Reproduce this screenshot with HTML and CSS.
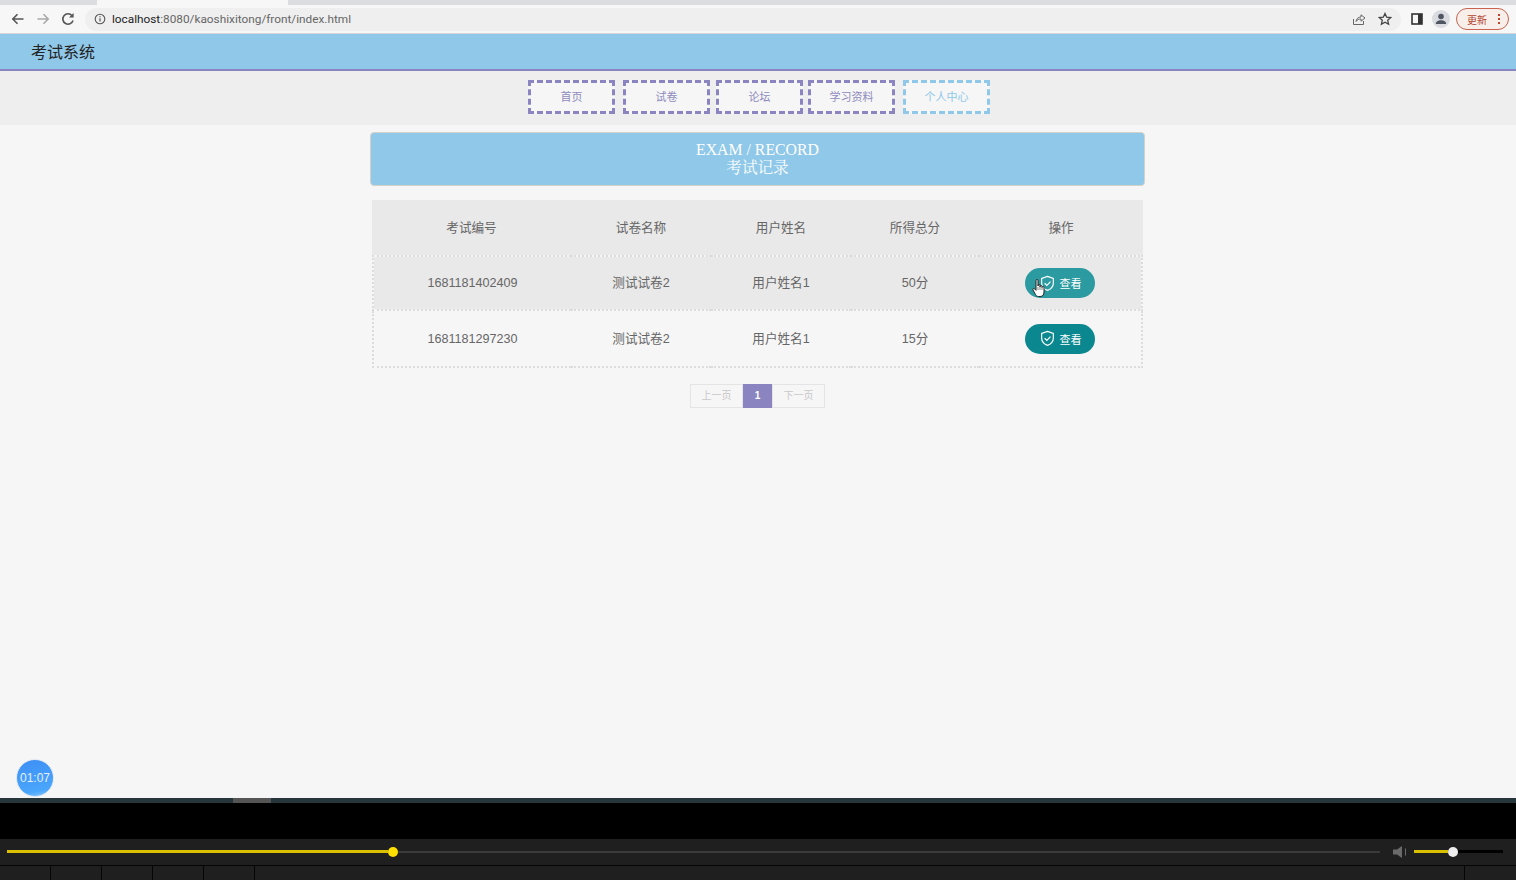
FILE: index.html
```html
<!DOCTYPE html>
<html lang="zh-CN">
<head>
    <meta charset="UTF-8">
    <meta name="viewport" content="width=device-width, initial-scale=1.0">
    <title>考试记录</title>
    <link rel="stylesheet" href="styles.css">
</head>
<body>
    <!-- browser chrome -->
    <div class="tab-strip"><div class="tab-active"></div></div>
    <div class="toolbar">
        <svg class="tool-icon" viewBox="0 0 16 16"><path d="M13.5 8H3M7.5 3.2 2.8 8l4.7 4.8" fill="none" stroke="#555" stroke-width="1.6"/></svg>
        <svg class="tool-icon" viewBox="0 0 16 16"><path d="M2.5 8H13M8.5 3.2 13.2 8l-4.7 4.8" fill="none" stroke="#aaa" stroke-width="1.6"/></svg>
        <svg class="tool-icon" viewBox="0 0 16 16"><path d="M13 9.5A5.2 5.2 0 1 1 12 4.6" fill="none" stroke="#555" stroke-width="1.6"/><path d="M13.6 2v4.6H9z" fill="#555"/></svg>
        <div class="url-bar">
            <svg class="info-icon" viewBox="0 0 12 12"><circle cx="6" cy="6" r="4.8" fill="none" stroke="#555" stroke-width="1.1"/><path d="M6 5.2v3.4M6 3.2v1.1" stroke="#555" stroke-width="1.2"/></svg>
            <span class="url-text"><span class="url-host">localhost</span>:8080/kaoshixitong/front/index.html</span>
            <svg class="url-icon" viewBox="0 0 14 14"><path d="M1.5 7v5.5h10V9" fill="none" stroke="#666" stroke-width="1"/><path d="M4 9.5c.4-3 2.500-4.500 5-4.500V2.800L13 6 9 9.200V7c-2 0-3.700.700-5 2.500z" fill="none" stroke="#666" stroke-width="1"/></svg>
            <svg class="url-icon star" viewBox="0 0 14 14"><path d="M7 1.500 8.700 5.200l4 .4-3 2.700.9 4L7 10.200l-3.600 2.100.9-4-3-2.700 4-.4z" fill="none" stroke="#444" stroke-width="1.300"/></svg>
        </div>
        <svg class="panel-icon" viewBox="0 0 12 12"><rect x="1" y="1" width="10" height="10" fill="none" stroke="#333" stroke-width="1.600"/><rect x="7" y="1" width="4" height="10" fill="#333"/></svg>
        <div class="avatar">
            <svg viewBox="0 0 18 18"><circle cx="9" cy="6.500" r="2.800" fill="#4f5560"/><path d="M3.800 14c0-2.600 2.400-3.800 5.200-3.800s5.200 1.200 5.200 3.800z" fill="#4f5560"/></svg>
        </div>
        <div class="update-btn"><span>更新</span><span class="update-dots"></span></div>
    </div>

    <!-- page -->
    <header class="site-header">考试系统</header>
    <nav class="site-nav">
        <a class="nav-item">首页</a>
        <a class="nav-item">试卷</a>
        <a class="nav-item">论坛</a>
        <a class="nav-item">学习资料</a>
        <a class="nav-item nav-active">个人中心</a>
    </nav>

    <main class="content">
        <div class="title-box">
            <div class="title-en">EXAM / RECORD</div>
            <div class="title-cn">考试记录</div>
        </div>

        <table class="record-table">
            <colgroup>
                <col class="col-id"><col class="col-paper"><col class="col-user"><col class="col-score"><col class="col-action">
            </colgroup>
            <thead>
                <tr><th>考试编号</th><th>试卷名称</th><th>用户姓名</th><th>所得总分</th><th>操作</th></tr>
            </thead>
            <tbody>
                <tr class="row-hover">
                    <td>1681181402409</td><td class="cell-cjk">测试试卷2</td><td class="cell-cjk">用户姓名1</td><td class="cell-cjk">50分</td>
                    <td>
                        <a class="view-btn btn-faded">
                            <svg class="shield" viewBox="0 0 16 16"><path d="M8 1.300 13.500 3.200v4.300c0 3.300-2.300 5.700-5.500 7-3.200-1.300-5.500-3.700-5.500-7V3.200z" fill="none" stroke="#fff" stroke-width="1.100"/><path d="M5.300 7.800 7.400 9.900l3.400-3.600" fill="none" stroke="#fff" stroke-width="1.100"/></svg>
                            查看
                        </a>
                    </td>
                </tr>
                <tr>
                    <td>1681181297230</td><td class="cell-cjk">测试试卷2</td><td class="cell-cjk">用户姓名1</td><td class="cell-cjk">15分</td>
                    <td>
                        <a class="view-btn">
                            <svg class="shield" viewBox="0 0 16 16"><path d="M8 1.300 13.500 3.200v4.300c0 3.300-2.300 5.700-5.500 7-3.200-1.300-5.500-3.700-5.500-7V3.200z" fill="none" stroke="#fff" stroke-width="1.100"/><path d="M5.300 7.800 7.400 9.900l3.400-3.600" fill="none" stroke="#fff" stroke-width="1.100"/></svg>
                            查看
                        </a>
                    </td>
                </tr>
            </tbody>
        </table>

        <div class="pager">
            <a class="page-btn page-side">上一页</a>
            <a class="page-btn page-current">1</a>
            <a class="page-btn page-side">下一页</a>
        </div>

        <!-- recording timer and mouse pointer lie over the page -->
        <div class="timer">01:07</div>
        <svg class="cursor" viewBox="0 0 16 20"><path d="M5 10V2.500a1 1 0 0 1 2 0V8 7.500a1 1 0 0 1 2 0V9 8.500a1 1 0 0 1 2 0V9.500a1 1 0 0 1 2 0V14c0 3-1.500 4.500-4 4.500H7.500c-1.500 0-2.300-.7-3-2L2 12c-.6-1 .6-2 1.500-1.200L5 12.300z" fill="#fff" stroke="#222" stroke-width="1"/><path d="M7 9v3M9 9v3M11 9.500V12" stroke="#555" stroke-width=".7"/></svg>
    </main>

    <!-- video player -->
    <div class="player-edge"><div class="player-thumb"></div></div>
    <div class="player-gap"></div>
    <div class="player-controls">
        <div class="seek">
            <div class="seek-done"></div>
            <div class="seek-knob"></div>
            <div class="seek-rest"></div>
        </div>
        <svg class="volume-icon" viewBox="0 0 16 14"><path d="M1 4.500h4L10 1v12L5 9.500H1z" fill="#6a6a6a"/><path d="M13.500 3.500v7" stroke="#6a6a6a" stroke-width="1"/></svg>
        <div class="volume">
            <div class="volume-done"></div>
            <div class="volume-knob"></div>
            <div class="volume-rest"></div>
        </div>
    </div>
    <div class="player-cells">
        <div class="cell"></div><div class="cell"></div><div class="cell"></div><div class="cell"></div><div class="cell"></div>
        <div class="cell cell-wide"></div>
        <div class="cell-end"></div>
    </div>
</body>
</html>
```

FILE: styles.css
```css
* {
    box-sizing: border-box;
}
body {
    margin: 0;
    height: 880px;
    overflow: hidden;
    display: flex;
    flex-direction: column;
    font-family: "Liberation Sans", "Noto Sans CJK SC", sans-serif;
    background-color: #f6f6f6;
    color: #666;
}

/* browser chrome */
.tab-strip {
    height: 5px;
    background-color: #dcdde0;
    padding-left: 97px;
}
.tab-active {
    width: 191px;
    height: 5px;
    background-color: #f7f7f7;
}
.toolbar {
    height: 29px;
    display: flex;
    align-items: center;
    background-color: #f7f7f7;
    border-bottom: 1px solid #d4d6d8;
    padding-left: 10px;
}
.tool-icon {
    width: 16px;
    height: 16px;
    margin-right: 9px;
}
.url-bar {
    width: 1316px;
    height: 23px;
    display: flex;
    align-items: center;
    background-color: #efefef;
    border-radius: 12px;
    padding-left: 9px;
}
.info-icon {
    width: 12px;
    height: 12px;
    margin-right: 6px;
}
.url-text {
    flex: 1;
    font-family: Roboto, "Liberation Sans", sans-serif;
    font-size: 11.8px;
    color: #666;
}
.url-host {
    color: #222;
}
.url-icon {
    width: 14px;
    height: 14px;
    margin-right: 12px;
}
.url-icon.star {
    margin-right: 9px;
}
.panel-icon {
    width: 12px;
    height: 12px;
    margin-left: 10px;
}
.avatar {
    width: 18px;
    height: 18px;
    margin-left: 9px;
    border-radius: 50%;
    background-color: #d9dbe0;
}
.avatar svg {
    display: block;
}
.update-btn {
    width: 53px;
    height: 22px;
    margin-left: 6px;
    display: flex;
    align-items: center;
    justify-content: space-between;
    padding: 0 8px 0 10px;
    border: 1px solid #c8634f;
    border-radius: 11px;
    font-size: 10px;
    color: #b5442e;
    background-color: #f8efeb;
}
.update-dots {
    width: 2px;
    height: 2px;
    background-color: #c0432c;
    box-shadow: 0 -4px 0 #c0432c, 0 4px 0 #c0432c;
}

/* page header + nav */
.site-header {
    height: 37px;
    padding-left: 31px;
    line-height: 37px;
    font-size: 16px;
    color: #222;
    background-color: #8fc8e8;
    border-bottom: 2px solid #8a85c0;
}
.site-nav {
    height: 54px;
    display: flex;
    justify-content: center;
    padding: 9px 0 0 2px;
    background-color: #eeeeee;
}
.nav-item {
    width: 87px;
    height: 34px;
    margin-right: 8px;
    line-height: 29px;
    text-align: center;
    font-size: 11px;
    color: #8f8bbd;
    background-color: #f6f6f6;
    border: 3px dashed #8a85c0;
}
.nav-item:nth-child(2) {
    margin-right: 6px;
}
.nav-item:nth-child(3) {
    margin-right: 5px;
}
.nav-item:last-child {
    margin-right: 0;
}
.nav-active {
    color: #8fc8e8;
    border-color: #8fc8e8;
}

/* content */
.content {
    flex: 1;
    position: relative;
    padding-top: 7px;
}
.title-box {
    width: 775px;
    height: 54px;
    margin-left: 370px;
    padding-top: 8px;
    text-align: center;
    color: #fff;
    background-color: #8fc8e8;
    border: 1px solid #d5d0c8;
    border-radius: 4px;
}
.title-en {
    font-family: "Liberation Serif", "Noto Sans CJK SC", serif;
    font-size: 15.8px;
    line-height: 17px;
}
.title-cn {
    font-family: "Liberation Serif", "Noto Serif CJK SC", "Noto Sans CJK SC", serif;
    font-size: 15.6px;
    line-height: 20px;
}
.record-table {
    width: 771px;
    margin: 14px 0 0 372px;
    border-collapse: separate;
    border-spacing: 0;
    table-layout: fixed;
    font-size: 12.6px;
    text-align: center;
    color: #666;
}
.col-id { width: 199px; }
.col-paper { width: 140px; }
.col-user { width: 140px; }
.col-score { width: 128px; }
.col-action { width: 164px; }
.record-table th {
    height: 55px;
    padding: 0 0 3px;
    font-weight: normal;
    background-color: #e9e9e9;
}
.record-table td {
    height: 57px;
    padding: 0;
    border-bottom: 2px dotted #dcdcdc;
    background-clip: padding-box;
}
.record-table .cell-cjk {
    padding-bottom: 3px;
}
.record-table .row-hover td {
    height: 56px;
    border-top: 2px dotted #dcdcdc;
    background-color: #e9e9e9;
}
.record-table td:first-child {
    border-left: 2px dotted #dcdcdc;
}
.record-table td:last-child {
    border-right: 2px dotted #dcdcdc;
}
.view-btn {
    width: 70px;
    height: 30px;
    display: inline-flex;
    align-items: center;
    justify-content: center;
    gap: 4px;
    font-size: 11px;
    color: #fff;
    background-color: #0a878f;
    border-radius: 15px;
    vertical-align: middle;
}
.btn-faded {
    background-color: #2b9aa1;
}
.shield {
    width: 17px;
    height: 17px;
}
.pager {
    display: flex;
    justify-content: center;
    margin-top: 16px;
    padding-right: 1px;
}
.page-btn {
    height: 24px;
    line-height: 22px;
    text-align: center;
    font-size: 10px;
    border: 1px solid #e4e4e4;
}
.page-side {
    width: 53px;
    color: #c8c8c8;
    background-color: #f6f6f6;
}
.page-current {
    width: 29px;
    font-weight: bold;
    color: #fff;
    background-color: #8a85c0;
    border-color: #8a85c0;
}
.timer {
    position: absolute;
    left: 16px;
    top: 634px;
    width: 38px;
    height: 38px;
    line-height: 36px;
    text-align: center;
    font-size: 12px;
    color: #e4f0ff;
    background: linear-gradient(170deg, #3d8ff5, #4aa6fb 82%, #8ccbfa);
    border: 1px solid #dfe7f0;
    border-radius: 50%;
}
.cursor {
    position: absolute;
    left: 1031px;
    top: 153px;
    width: 16px;
    height: 20px;
}

/* video player */
.player-edge {
    height: 5px;
    padding-left: 233px;
    background-color: #27363a;
}
.player-thumb {
    width: 38px;
    height: 5px;
    background-color: #555;
}
.player-gap {
    height: 36px;
    background-color: #000;
}
.player-controls {
    height: 26px;
    display: flex;
    align-items: center;
    padding: 0 0 1px 7px;
    background-color: #1f1f1f;
}
.seek {
    width: 1373px;
    display: flex;
    align-items: center;
}
.seek-done {
    width: 381px;
    height: 3px;
    background-color: #d9c000;
}
.seek-knob {
    width: 10px;
    height: 10px;
    border-radius: 50%;
    background-color: #ffdf00;
}
.seek-rest {
    flex: 1;
    height: 2px;
    background-color: #3a3a3a;
}
.volume-icon {
    width: 16px;
    height: 14px;
    margin-left: 12px;
}
.volume {
    width: 89px;
    margin-left: 6px;
    display: flex;
    align-items: center;
}
.volume-done {
    width: 34px;
    height: 3px;
    background-color: #d9c000;
}
.volume-knob {
    width: 10px;
    height: 10px;
    border-radius: 50%;
    background-color: #eee;
}
.volume-rest {
    flex: 1;
    height: 3px;
    background-color: #000;
}
.player-cells {
    height: 15px;
    display: flex;
    background-color: #1f1f1f;
    border-top: 1px solid #050505;
}
.cell {
    width: 51px;
    border-right: 1px solid #050505;
}
.cell-wide {
    width: 1210px;
}
.cell-end {
    flex: 1;
}
```
